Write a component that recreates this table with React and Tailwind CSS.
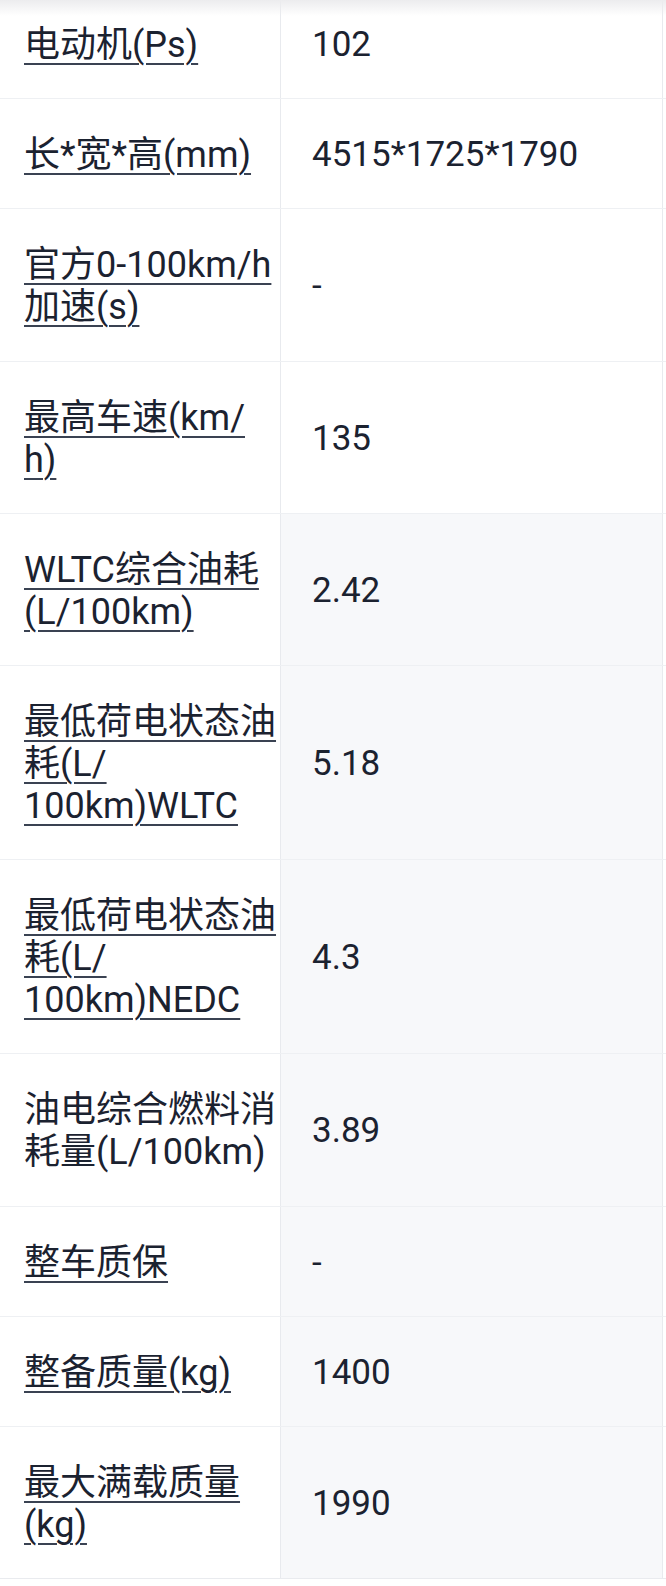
const rows = [
  { label: ['电动机(Ps)'], value: '102' },
  { label: ['长*宽*高(mm)'], value: '4515*1725*1790' },
  { label: ['官方0-100km/h', '加速(s)'], value: '-' },
  { label: ['最高车速(km/', 'h)'], value: '135' },
  { label: ['WLTC综合油耗', '(L/100km)'], value: '2.42', shaded: true },
  { label: ['最低荷电状态油', '耗(L/', '100km)WLTC'], value: '5.18', shaded: true },
  { label: ['最低荷电状态油', '耗(L/', '100km)NEDC'], value: '4.3', shaded: true },
  { label: ['油电综合燃料消', '耗量(L/100km)'], value: '3.89', shaded: true, plain: true },
  { label: ['整车质保'], value: '-', shaded: true },
  { label: ['整备质量(kg)'], value: '1400', shaded: true },
  { label: ['最大满载质量', '(kg)'], value: '1990', shaded: true },
];

const Label = ({ lines, plain }) => (
  <span
    className={
      plain
        ? ''
        : 'underline decoration-[1.5px] underline-offset-[6px] decoration-[#3a4252]'
    }
  >
    {lines.map((line, i) => (
      <span key={i}>
        {i > 0 && <br />}
        {line}
      </span>
    ))}
  </span>
);

export default function App() {
  return (
    <div
      className="relative w-[666px] min-h-[1586px] bg-white overflow-hidden text-[#1b2230]"
      style={{ fontFamily: "Roboto, 'Noto Sans CJK SC', sans-serif" }}
    >
      <div className="-mt-[11px] border-b border-[#e9ebef]">
        {rows.map((row, i) => (
          <div
            key={i}
            className={`grid grid-cols-[281px_382px_1fr] text-[36px] leading-[42px] ${
              i < rows.length - 1 ? 'border-b border-[#eef0f3]' : ''
            }`}
          >
            <div className="pl-[24px] pt-[35px] pb-[32.2px] whitespace-nowrap border-r border-[#e8eaee] flex items-center">
              <Label lines={row.label} plain={row.plain} />
            </div>
            <div
              className={`pl-[31px] pt-[35px] pb-[32.2px] text-[35px] flex items-center border-r border-[#e8eaee] ${
                row.shaded ? 'bg-[#f7f8fa]' : 'bg-white'
              }`}
            >
              {row.value}
            </div>
            <div className="bg-white" />
          </div>
        ))}
      </div>
      <div className="absolute top-0 left-0 right-0 h-[16px] bg-gradient-to-b from-[#ececee] to-transparent" />
    </div>
  );
}
